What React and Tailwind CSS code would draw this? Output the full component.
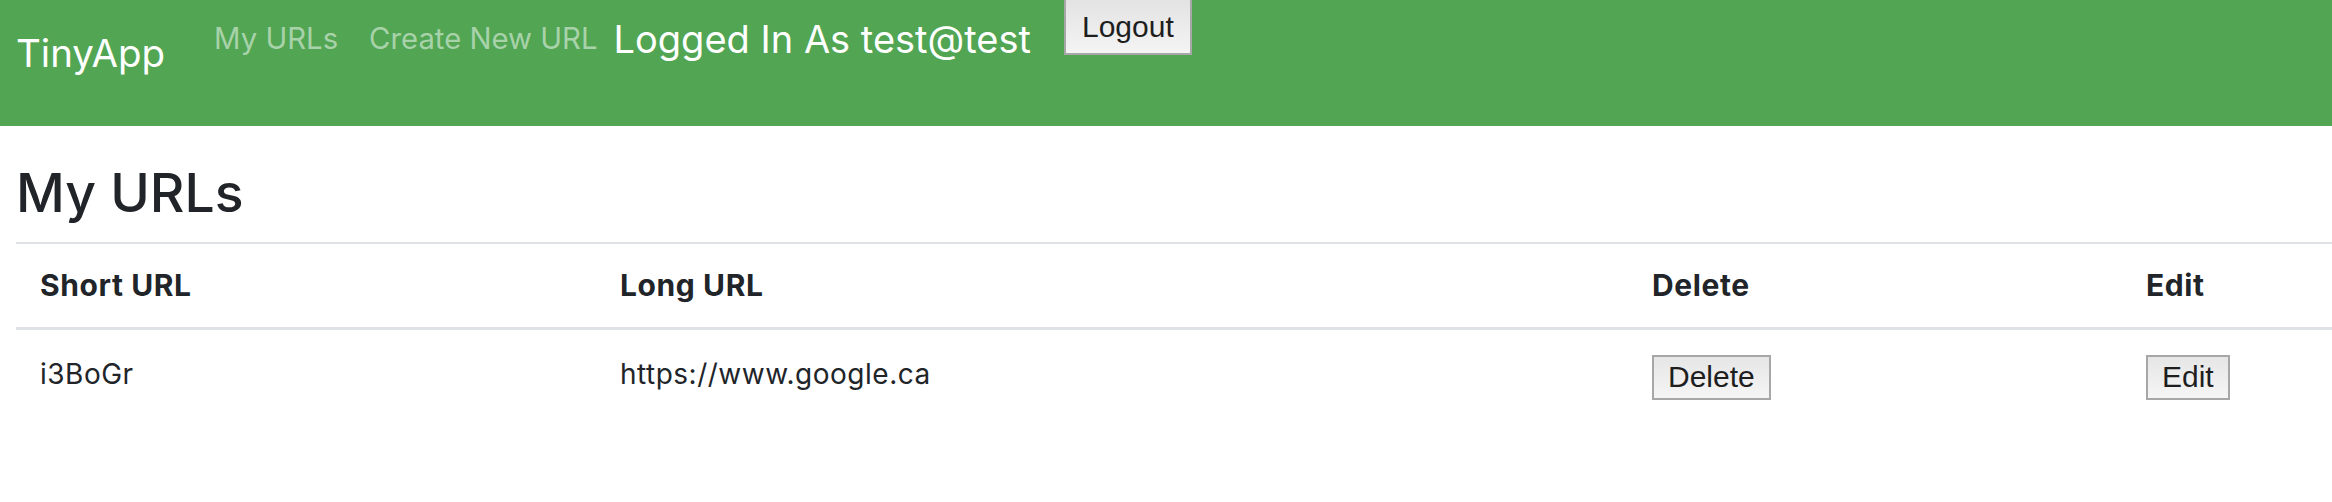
export default function App() {
  const urls = [{ short: 'i3BoGr', long: 'https://www.google.ca' }];

  return (
    <div className="min-h-screen bg-white text-[#212529]" style={{ fontFamily: 'Inter, "Noto Sans", sans-serif' }}>
      {/* Navbar */}
      <nav className="flex h-[126px] items-start bg-[#51a553]">
        <a className="mt-[34px] ml-[16px] text-[38.5px] leading-none text-white">TinyApp</a>
        <a className="mt-[24px] ml-[49px] text-[29.3px] leading-none text-[#a8d2a9]">My URLs</a>
        <a className="mt-[24px] ml-[31px] text-[29.3px] leading-none text-[#a8d2a9]">Create New URL</a>
        <span className="mt-[20px] ml-[16px] text-[38px] leading-none text-white">Logged In As test@test</span>
        <form className="ml-[33px]">
          <button
            type="button"
            className="-mt-[2px] h-[57px] border-2 border-[#a7a7a7] bg-gradient-to-b from-[#e3e3e3] to-[#f4f4f4] px-[16px] text-[30px] leading-none text-[#1e1e1e]"
            style={{ fontFamily: '"Liberation Sans", Arial, sans-serif' }}
          >
            Logout
          </button>
        </form>
      </nav>

      {/* Content */}
      <main>
        <h1 className="mt-[35px] mb-[17px] pl-[16px] text-[53.5px] leading-[1.2] font-medium">My URLs</h1>

        <div className="ml-[16px]">
          <div className="grid h-[88px] grid-cols-[580px_1032px_494px_1fr] items-center border-t-2 border-b-[3px] border-[#dee2e6] text-[30px] font-bold tracking-[0.6px]">
            <div className="pl-[24px]">Short URL</div>
            <div className="pl-[24px]">Long URL</div>
            <div className="pl-[24px]">Delete</div>
            <div className="pl-[24px]">Edit</div>
          </div>

          {urls.map((u) => (
            <div key={u.short} className="grid h-[88px] grid-cols-[580px_1032px_494px_1fr] items-center text-[28px] tracking-[0.5px]">
              <div className="pl-[24px]">{u.short}</div>
              <div className="pl-[24px]">{u.long}</div>
              <div className="mt-[6px] pl-[24px]">
                <TableButton label="Delete" />
              </div>
              <div className="mt-[6px] pl-[24px]">
                <TableButton label="Edit" />
              </div>
            </div>
          ))}
        </div>
      </main>
    </div>
  );
}

function TableButton({ label }) {
  return (
    <button
      type="button"
      className="h-[45px] border-2 border-[#a7a7a7] bg-gradient-to-b from-[#e6e6e6] to-[#f5f5f5] px-[14px] text-[30px] leading-none tracking-normal text-[#1e1e1e]"
      style={{ fontFamily: '"Liberation Sans", Arial, sans-serif' }}
    >
      {label}
    </button>
  );
}
